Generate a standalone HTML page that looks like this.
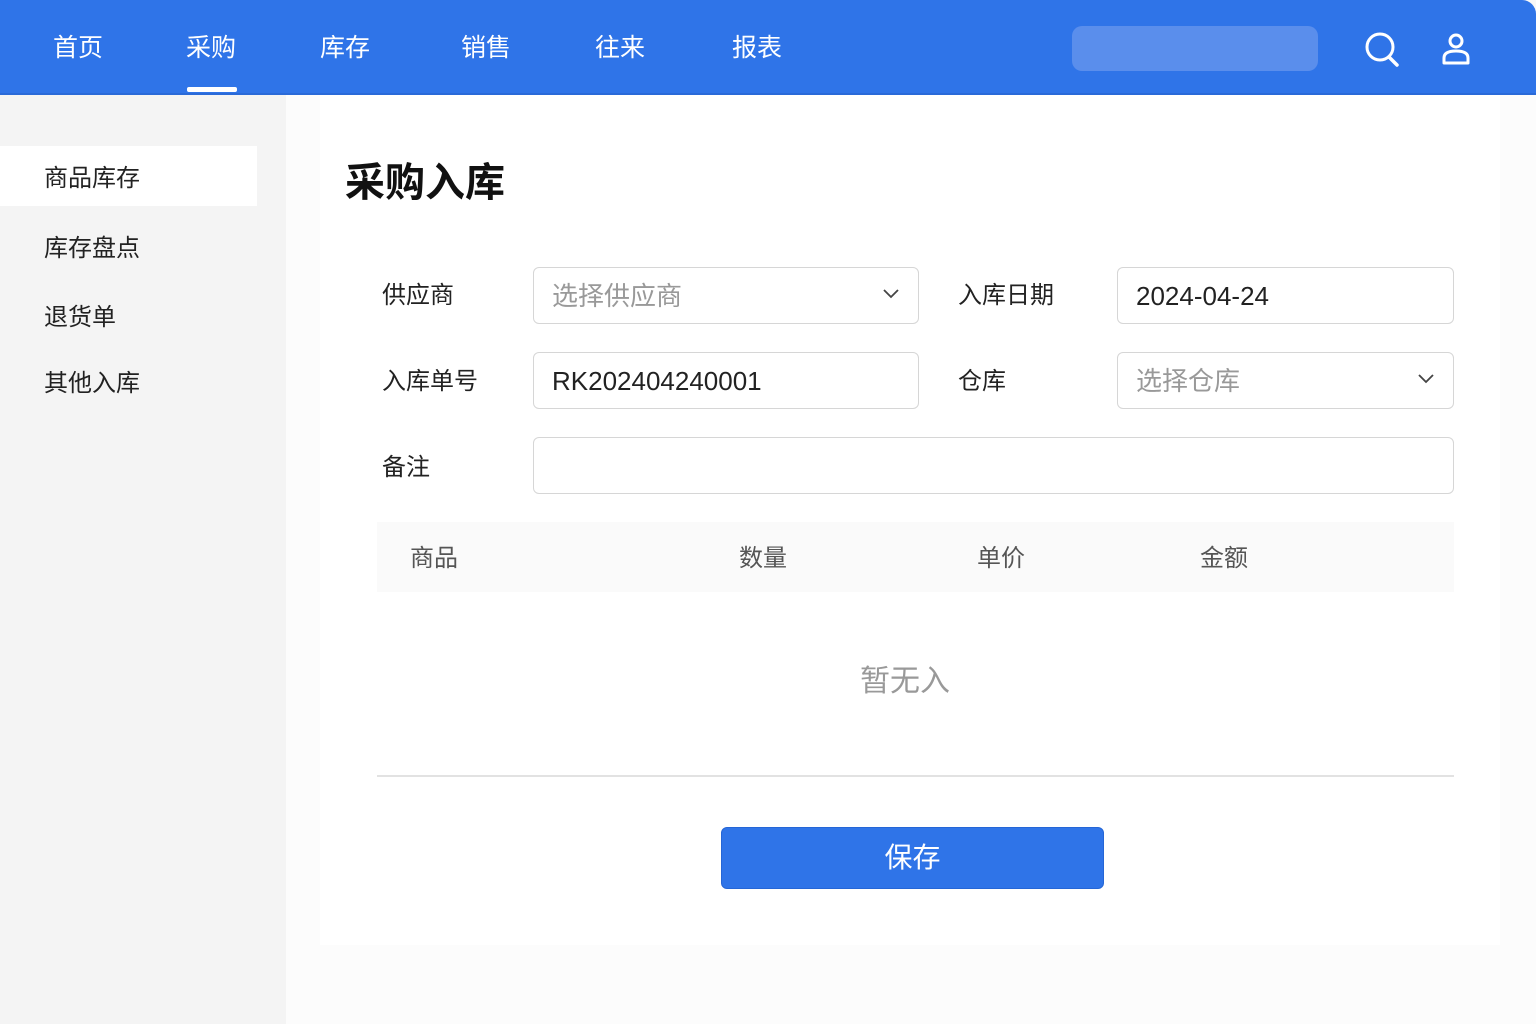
<!DOCTYPE html>
<html><head><meta charset="utf-8"><style>
*{margin:0;padding:0;box-sizing:border-box}
body{width:1536px;height:1024px;overflow:hidden;background:#f7f7f7;font-family:"Liberation Sans","Noto Sans CJK SC",sans-serif;position:relative;color:#222}
.hdr{position:absolute;left:0;top:0;width:1536px;height:95px;background:#2f74e8;border-bottom:2px solid #2a6ad8;border-top-right-radius:14px}
.nav{position:absolute;top:30px;color:#fff;font-size:25px;line-height:36px}
.ul{position:absolute;left:187px;top:87px;width:50px;height:5px;background:#fff;border-radius:2px}
.sb{position:absolute;left:0;top:95px;width:286px;height:929px;background:#f4f4f4}
.si{position:absolute;left:44px;font-size:24px;color:#222}
.main{position:absolute;left:286px;top:95px;width:1250px;height:929px;background:#fcfcfc}
.card{position:absolute;left:320px;top:95px;width:1180px;height:850px;background:#fff}
.t{position:absolute;left:345px;top:150px;font-size:40px;font-weight:bold;color:#111}
.lb{position:absolute;font-size:24px;color:#222}
.in{position:absolute;height:57px;border:1px solid #d6d6d6;border-radius:6px;background:#fff;font-size:26px;line-height:57px;padding-left:18px;color:#222}
.ph{color:#999}
.chev{position:absolute;right:18px;top:20px}
.th{position:absolute;left:377px;top:522px;width:1077px;height:70px;background:#fafafa}
.tc{position:absolute;top:538px;font-size:24px;color:#555}
</style></head><body>
<div class="hdr"></div>
<div class="nav" style="left:53px">首页</div>
<div class="nav" style="left:186px">采购</div>
<div class="nav" style="left:320px">库存</div>
<div class="nav" style="left:461px">销售</div>
<div class="nav" style="left:595px">往来</div>
<div class="nav" style="left:732px">报表</div>
<div class="ul"></div>
<div style="position:absolute;left:1072px;top:26px;width:246px;height:45px;border-radius:10px;background:#5a8eec"></div>
<svg style="position:absolute;left:1362px;top:30px" width="40" height="38" viewBox="0 0 40 38"><circle cx="18" cy="17" r="13" fill="none" stroke="#fff" stroke-width="3"/><line x1="27" y1="27" x2="35" y2="35" stroke="#fff" stroke-width="3.5" stroke-linecap="round"/></svg>
<svg style="position:absolute;left:1441px;top:31px" width="32" height="34" viewBox="0 0 32 34"><circle cx="15" cy="10" r="6" fill="none" stroke="#fff" stroke-width="3"/><path d="M3 32 V27 Q3 20 15 20 Q27 20 27 27 V32 Z" fill="none" stroke="#fff" stroke-width="3" stroke-linejoin="round"/></svg>
<div class="sb"></div>
<div style="position:absolute;left:0;top:146px;width:257px;height:60px;background:#fff"></div>
<div class="si" style="top:158px">商品库存</div>
<div class="si" style="top:228px">库存盘点</div>
<div class="si" style="top:297px">退货单</div>
<div class="si" style="top:363px">其他入库</div>
<div class="main"></div>
<div class="card"></div>
<div class="t">采购入库</div>
<div class="lb" style="left:382px;top:275px">供应商</div>
<div class="in" style="left:533px;top:267px;width:386px"><span class="ph">选择供应商</span><svg class="chev" width="18" height="12" viewBox="0 0 18 12"><path d="M2 2 L9 9 L16 2" fill="none" stroke="#444" stroke-width="1.8"/></svg></div>
<div class="lb" style="left:958px;top:275px">入库日期</div>
<div class="in" style="left:1117px;top:267px;width:337px">2024-04-24</div>
<div class="lb" style="left:382px;top:361px">入库单号</div>
<div class="in" style="left:533px;top:352px;width:386px">RK202404240001</div>
<div class="lb" style="left:958px;top:361px">仓库</div>
<div class="in" style="left:1117px;top:352px;width:337px"><span class="ph">选择仓库</span><svg class="chev" width="18" height="12" viewBox="0 0 18 12"><path d="M2 2 L9 9 L16 2" fill="none" stroke="#444" stroke-width="1.8"/></svg></div>
<div class="lb" style="left:382px;top:447px">备注</div>
<div class="in" style="left:533px;top:437px;width:921px"></div>
<div class="th"></div>
<div class="tc" style="left:410px">商品</div>
<div class="tc" style="left:739px">数量</div>
<div class="tc" style="left:977px">单价</div>
<div class="tc" style="left:1200px">金额</div>
<div style="position:absolute;left:860px;top:656px;font-size:30px;color:#999">暂无入</div>
<div style="position:absolute;left:377px;top:775px;width:1077px;height:2px;background:#e2e2e2"></div>
<div style="position:absolute;left:721px;top:827px;width:383px;height:62px;background:#2f74e8;border-radius:6px;border:1px solid #2566d6;color:#fff;font-size:28px;text-align:center;line-height:60px">保存</div>
</body></html>
